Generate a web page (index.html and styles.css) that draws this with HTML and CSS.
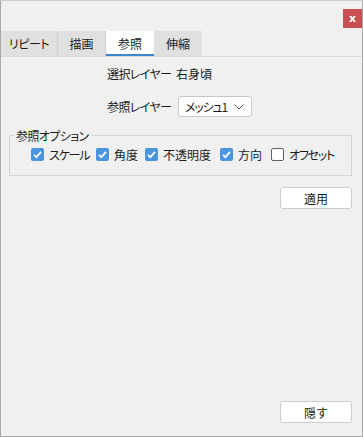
FILE: index.html
```html
<!DOCTYPE html>
<html lang="ja">
<head>
    <meta charset="UTF-8">
    <meta name="viewport" content="width=device-width, initial-scale=1.0">
    <title>参照</title>
    <link rel="stylesheet" href="styles.css">
</head>
<body>
    <div class="window">
        <div class="titlebar">
            <button class="close">x</button>
        </div>
        <div class="tabs">
            <div class="tab t1">リピート</div>
            <div class="tab t2">描画</div>
            <div class="tab t3 active">参照</div>
            <div class="tab t4">伸縮</div>
        </div>
        <div class="panel">
            <div class="form">
                <div class="row">
                    <span class="label">選択レイヤー</span>
                    <span class="value">右身頃</span>
                </div>
                <div class="row">
                    <span class="label">参照レイヤー</span>
                    <div class="select">
                        <span class="kana">メッシュ1</span>
                        <svg width="10" height="6" viewBox="0 0 10 6"><path d="M0.5 0.5 L5 5 L9.5 0.5" fill="none" stroke="#555" stroke-width="1"/></svg>
                    </div>
                </div>
            </div>
            <fieldset class="group">
                <legend>参照オプション</legend>
                <div class="checks">
                    <label class="check"><span class="box on"><svg width="13" height="13" viewBox="0 0 13 13"><path d="M3 6.8 L5.4 9.2 L10 3.8" fill="none" stroke="#fff" stroke-width="1.8"/></svg></span><span class="kana">スケール</span></label>
                    <label class="check"><span class="box on"><svg width="13" height="13" viewBox="0 0 13 13"><path d="M3 6.8 L5.4 9.2 L10 3.8" fill="none" stroke="#fff" stroke-width="1.8"/></svg></span>角度</label>
                    <label class="check"><span class="box on"><svg width="13" height="13" viewBox="0 0 13 13"><path d="M3 6.8 L5.4 9.2 L10 3.8" fill="none" stroke="#fff" stroke-width="1.8"/></svg></span>不透明度</label>
                    <label class="check"><span class="box on"><svg width="13" height="13" viewBox="0 0 13 13"><path d="M3 6.8 L5.4 9.2 L10 3.8" fill="none" stroke="#fff" stroke-width="1.8"/></svg></span>方向</label>
                    <label class="check"><span class="box"></span><span class="kana">オフセット</span></label>
                </div>
            </fieldset>
            <div class="actions">
                <button class="btn">適用</button>
            </div>
            <div class="footer">
                <button class="btn">隠す</button>
            </div>
        </div>
    </div>
</body>
</html>
```

FILE: styles.css
```css
* {
    margin: 0;
    padding: 0;
    box-sizing: border-box;
}
body {
    background: #f0f0f0;
    font-family: "Noto Sans CJK JP", "Noto Sans", sans-serif;
    font-size: 12px;
    font-feature-settings: "palt";
    color: #1a1a1a;
    white-space: nowrap;
}
.kana {
    letter-spacing: -1.2px;
}
.window {
    width: 363px;
    height: 437px;
    border: 1px solid #a9a9a9;
    border-top-color: #cfcfcf;
    display: flex;
    flex-direction: column;
}
.titlebar {
    height: 30px;
    display: flex;
    justify-content: flex-end;
    align-items: flex-start;
    padding: 8px 0 0 0;
}
.close {
    width: 19px;
    height: 19px;
    border: none;
    background: #c75050;
    color: #fff;
    font-family: "DejaVu Sans", sans-serif;
    font-weight: bold;
    font-size: 11px;
    line-height: 17px;
}
.tabs {
    display: flex;
    height: 26px;
    border-bottom: 1px solid #d9d9d9;
}
.tab {
    background: #e0e0e0;
    display: flex;
    align-items: center;
    justify-content: center;
    border-right: 1px solid #d0d0d0;
}
.t1 { width: 57px; letter-spacing: -0.5px; }
.t2 { width: 48px; }
.t3 { width: 48px; }
.t4 { width: 48px; border-right: none; }
.tab.active {
    background: #ffffff;
    border-bottom: 2px solid #3d86cc;
    border-right: none;
    padding-top: 2px;
}
.panel {
    flex: 1;
    display: flex;
    flex-direction: column;
    padding: 0 10px 13px 8px;
}
.form {
    display: flex;
    flex-direction: column;
    padding: 6px 0 0 98px;
    gap: 12px;
}
.row {
    display: flex;
    align-items: center;
    height: 21px;
}
.label {
    width: 69px;
    flex-shrink: 0;
    letter-spacing: -0.6px;
}
.select {
    margin-left: 2px;
    width: 74px;
    height: 21px;
    background: #fff;
    border: 1px solid #c9c9c9;
    border-radius: 3px;
    display: flex;
    align-items: center;
    justify-content: space-between;
    padding: 0 7px 0 6px;
}
.group {
    margin-top: 11px;
    border: 1px solid #d5d5d5;
    padding: 3px 0 0 0;
    height: 48px;
}
.group legend {
    margin-left: 4px;
    padding: 0 2px;
    line-height: 15px;
    letter-spacing: -0.6px;
}
.checks {
    display: grid;
    grid-template-columns: 65px 49px 75px 51px auto;
    align-items: center;
    padding-left: 21px;
}
.check {
    display: flex;
    align-items: center;
}
.box {
    width: 13px;
    height: 13px;
    border: 1px solid #5f5f5f;
    border-radius: 2px;
    background: #fff;
    margin-right: 5px;
    display: flex;
    flex-shrink: 0;
}
.box.on {
    background: #4a94e0;
    border: none;
}
.actions {
    display: flex;
    justify-content: flex-end;
    margin-top: 11px;
}
.btn {
    width: 72px;
    height: 22px;
    background: #fff;
    border: 1px solid #cdcdcd;
    border-radius: 3px;
    font-family: "Noto Sans CJK JP", sans-serif;
    font-size: 12px;
    color: #1a1a1a;
}
.footer {
    margin-top: auto;
    display: flex;
    justify-content: flex-end;
}
```
